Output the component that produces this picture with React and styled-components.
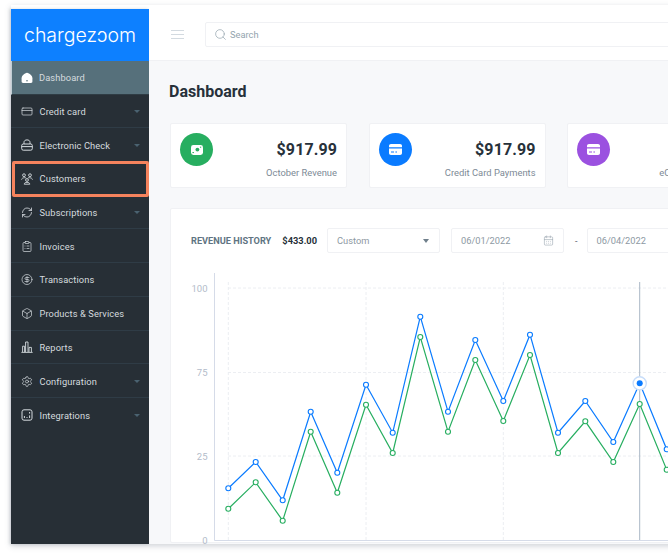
import styled, { createGlobalStyle } from 'styled-components';
import { CreditCard, RefreshCw, ClipboardList, CircleDollarSign, Box, Settings, Search, CalendarDays } from 'lucide-react';

const Global = createGlobalStyle`
    html, body {
        margin: 0;
        width: 668px;
        height: 553px;
        overflow: hidden;
        background: #fff;
        font-family: Roboto, "Liberation Sans", sans-serif;
    }
    * { box-sizing: border-box; }
`;

const HomeIcon = () => (
    <svg width="12" height="12" viewBox="0 0 12 12">
        <path d="M6 .8 C8.5 1.4 11.4 3.6 11.4 6.2 V9.6 C11.4 10.6 10.8 11 10 11 H2 C1.2 11 .6 10.6 .6 9.6 V6.2 C.6 3.6 3.5 1.4 6 .8Z" fill="#fff" />
        <circle cx="6" cy="8.8" r=".8" fill="#56707b" />
    </svg>
);

const LockCardIcon = () => (
    <svg width="12" height="12" viewBox="0 0 12 12" fill="none" stroke="#d5dbdf" strokeWidth="1">
        <rect x=".7" y="5" width="10.6" height="6.2" rx="1.6" />
        <path d="M3 5 V3.4 C3 1.7 4.3 .9 6 .9 C7.7 .9 9 1.7 9 3.4 V5" />
        <path d="M.7 7.6 H11.3" />
    </svg>
);

const PeopleIcon = () => (
    <svg width="12" height="12" viewBox="0 0 12 12" fill="none" stroke="#d5dbdf" strokeWidth=".9">
        <circle cx="3" cy="2.2" r="1.4" />
        <circle cx="9" cy="2.2" r="1.4" />
        <circle cx="6" cy="7" r="1.4" />
        <path d="M.6 6.6 C.6 4.4 5.2 4.4 5.2 5.2 M6.8 5.2 C6.8 4.4 11.4 4.4 11.4 6.6 M3.2 11.2 C3.2 8.7 8.8 8.7 8.8 11.2 Z" />
    </svg>
);

const BarsIcon = () => (
    <svg width="12" height="12" viewBox="0 0 12 12" fill="none" stroke="#d5dbdf" strokeWidth=".9">
        <path d="M1.6 11 V5.2 H3.6 V11 M4.6 11 V1 H7 V11 M8 11 V6.4 H10.4 V11 M.4 11.4 H11.6" />
    </svg>
);

const PluginIcon = () => (
    <svg width="12" height="12" viewBox="0 0 12 12" fill="none" stroke="#d5dbdf" strokeWidth="1">
        <rect x="1" y=".8" width="10" height="10.4" rx="2" />
        <path d="M3.4 9 V7 M6 9 V8 M8.6 4.6 V3 M8.6 9 V6.4" />
    </svg>
);

const BanknoteIcon = () => (
    <svg width="16" height="16" viewBox="0 0 16 16">
        <rect x="2" y="3" width="12" height="10" rx="2.4" fill="#fff" />
        <circle cx="8.4" cy="7.6" r="1.9" fill="#27ae60" />
        <path d="M11 5.2 h1.2 M3.4 10.6 h1.6" stroke="#27ae60" strokeWidth="1" />
    </svg>
);

const CardFillIcon = ({ color }) => (
    <svg width="15" height="15" viewBox="0 0 15 15">
        <path d="M1 4 C1 2.8 1.8 2 3 2 H12 C13.2 2 14 2.8 14 4 V5.2 H1 Z" fill="#fff" />
        <path d="M1 6.6 H14 V11 C14 12.2 13.2 13 12 13 H3 C1.8 13 1 12.2 1 11 Z" fill="#fff" />
        <path d="M3 10 H6 M7.4 10 H9" stroke={color} strokeWidth="1" />
    </svg>
);

const menu = [
    { label: 'Dashboard', icon: <HomeIcon />, active: true },
    { label: 'Credit card', icon: <CreditCard size={13} strokeWidth={1.4} />, arrow: true },
    { label: 'Electronic Check', icon: <LockCardIcon />, arrow: true },
    { label: 'Customers', icon: <PeopleIcon />, boxed: true },
    { label: 'Subscriptions', icon: <RefreshCw size={13} strokeWidth={1.6} />, arrow: true },
    { label: 'Invoices', icon: <ClipboardList size={13} strokeWidth={1.4} /> },
    { label: 'Transactions', icon: <CircleDollarSign size={13} strokeWidth={1.4} /> },
    { label: 'Products & Services', icon: <Box size={13} strokeWidth={1.4} /> },
    { label: 'Reports', icon: <BarsIcon /> },
    { label: 'Configuration', icon: <Settings size={13} strokeWidth={1.4} />, arrow: true },
    { label: 'Integrations', icon: <PluginIcon />, arrow: true },
];

const cards = [
    { color: '#27ae60', amount: '$917.99', label: 'October Revenue', icon: <BanknoteIcon /> },
    { color: '#0a7bff', amount: '$917.99', label: 'Credit Card Payments', icon: <CardFillIcon color="#0a7bff" /> },
    { color: '#9b51e0', amount: '$917.99', label: 'eCheck Payments', icon: <CardFillIcon color="#9b51e0" /> },
];

const xs = [227.3, 254.7, 281.7, 309.7, 336.3, 365, 391.7, 419.3, 447, 474.3, 502.3, 529, 557, 584.3, 612.3, 638.7, 665.7, 693];
const blue = [488.3, 462, 500.3, 411.7, 472.7, 384.7, 432.7, 316.7, 411.7, 340, 401, 334.7, 432.7, 401, 442, 383.3, 449.3, 420];
const green = [508.7, 482.3, 520.7, 431.7, 492.7, 404.7, 453, 337, 431.7, 360, 421, 355, 453, 421.3, 462, 404, 469.7, 440];

function Series({ values, color }) {
    return (
        <g>
            <polyline points={values.map((y, i) => `${xs[i]},${y}`).join(' ')} fill="none" stroke={color} strokeWidth="1.2" />
            {values.map((y, i) => (
                <circle key={i} cx={xs[i]} cy={y} r="2.5" fill="#fff" stroke={color} strokeWidth="1.1" />
            ))}
        </g>
    );
}

function Chart() {
    return (
        <svg width="498" height="278" viewBox="170 270 498 278">
            {[288, 372.5, 456].map(y => (
                <line key={y} x1="227" x2="668" y1={y} y2={y} stroke="#eceef2" strokeWidth="1" strokeDasharray="3 2" />
            ))}
            {[227.3, 365, 502.3].map(x => (
                <line key={x} x1={x} x2={x} y1="282" y2="540" stroke="#eceef2" strokeWidth="1" strokeDasharray="3 2" />
            ))}
            <path d="M213.5 273 V540.5 H668" fill="none" stroke="#d5dbe8" strokeWidth="1" />
            {[['100', 288], ['75', 372.5], ['25', 456], ['0', 540]].map(([t, y]) => (
                <text key={t} x="206.5" y={y + 3.5} textAnchor="end" fontSize="9.5" fill="#b3bcca" fontFamily="Roboto, sans-serif">{t}</text>
            ))}
            <line x1="638.7" x2="638.7" y1="282" y2="540" stroke="#a9b7c6" strokeWidth="1" />
            <Series values={green} color="#27ae60" />
            <Series values={blue} color="#0a7bff" />
            <circle cx="638.7" cy="383.3" r="6.6" fill="#fff" stroke="#c7ddfa" strokeWidth="1.4" />
            <circle cx="638.7" cy="383.3" r="3" fill="#0a7bff" />
        </svg>
    );
}

export default function App() {
    return (
        <>
            <Global />
            <Frame>
                <Sidebar>
                    <Logo>chargezɔom</Logo>
                    {menu.map(m => (
                        <Row key={m.label} $active={m.active} $boxed={m.boxed}>
                            <RowIcon>{m.icon}</RowIcon>
                            <RowLabel>{m.label}</RowLabel>
                            {m.arrow && <Caret />}
                        </Row>
                    ))}
                </Sidebar>
                <Main>
                    <Topbar>
                        <Burger><span /><span /><span /></Burger>
                        <SearchBox>
                            <Search size={13} strokeWidth={1.3} color="#93a3ad" />
                            <span>Search</span>
                        </SearchBox>
                    </Topbar>
                    <Content>
                        <Title>Dashboard</Title>
                        <Cards>
                            {cards.map(c => (
                                <Card key={c.color}>
                                    <Circle $color={c.color}>{c.icon}</Circle>
                                    <CardText>
                                        <Amount>{c.amount}</Amount>
                                        <CardLabel>{c.label}</CardLabel>
                                    </CardText>
                                </Card>
                            ))}
                        </Cards>
                        <Panel>
                            <PanelHeader>
                                <PanelTitle>REVENUE HISTORY</PanelTitle>
                                <PanelTotal>$433.00</PanelTotal>
                                <Field>
                                    <span>Custom</span>
                                    <FieldCaret />
                                </Field>
                                <Field>
                                    <span>06/01/2022</span>
                                    <CalendarDays size={11} strokeWidth={1.3} color="#9aa6b0" />
                                </Field>
                                <Dash>-</Dash>
                                <Field>
                                    <span>06/04/2022</span>
                                </Field>
                            </PanelHeader>
                            <Chart />
                        </Panel>
                    </Content>
                </Main>
            </Frame>
        </>
    );
}

const Frame = styled.div`
    display: flex;
    width: 690px;
    height: 539px;
    margin: 5px 0 0 11px;
    box-shadow: 0 2px 6px rgba(60, 70, 90, 0.25);
`;

const Sidebar = styled.div`
    width: 138px;
    flex-shrink: 0;
    margin-top: 4px;
    background: #272f36;
    box-shadow: -1px 0 3px rgba(60, 70, 90, 0.2);
`;

const Logo = styled.div`
    height: 52px;
    display: flex;
    align-items: center;
    justify-content: center;
    background: #0d80ff;
    color: #fff;
    font-family: Inter, sans-serif;
    font-weight: 300;
    font-size: 19.5px;
`;

const Row = styled.div`
    position: relative;
    height: 33.7px;
    display: flex;
    align-items: center;
    padding: 1px 10px 0 ${p => (p.$active ? '8.5px' : '10px')};
    color: #d5dbdf;
    background: ${p => (p.$active ? '#56707b' : 'transparent')};
    border-left: ${p => (p.$active ? '1.5px solid #c2ced4' : 'none')};
    border-bottom: 1px solid ${p => (p.$active ? '#2f3c44' : '#2f3c46')};

    &:last-child {
        border-bottom: none;
    }

    ${p => p.$boxed && `
        &::after {
            content: '';
            position: absolute;
            top: -1px;
            bottom: -2px;
            left: 1px;
            right: 0;
            border: 3px solid #f5835d;
            border-radius: 2px;
        }
    `}
`;

const RowIcon = styled.div`
    width: 12px;
    height: 12px;
    display: flex;
    align-items: center;
    justify-content: center;
    flex-shrink: 0;
    color: #d5dbdf;
`;

const RowLabel = styled.span`
    margin-left: 6.5px;
    font-size: 9.3px;
    letter-spacing: 0.1px;
    flex: 1;
    white-space: nowrap;
`;

const Caret = styled.i`
    width: 0;
    height: 0;
    margin-right: -1px;
    border-left: 3px solid transparent;
    border-right: 3px solid transparent;
    border-top: 3px solid #4a6270;
`;

const Main = styled.div`
    flex: 1;
    min-width: 0;
    display: flex;
    flex-direction: column;
`;

const Topbar = styled.div`
    height: 56px;
    flex-shrink: 0;
    display: flex;
    align-items: center;
    padding: 4px 0 0 22px;
    background: #fff;
    border-bottom: 1px solid #f0f1f4;
`;

const Burger = styled.div`
    width: 13px;
    margin-right: 21px;
    display: flex;
    flex-direction: column;
    gap: 2.5px;

    span {
        height: 1.2px;
        background: #d3dae0;
    }
`;

const SearchBox = styled.div`
    flex: 1;
    height: 25.5px;
    display: flex;
    align-items: center;
    gap: 3px;
    padding-left: 8px;
    border: 1px solid #f0f1f4;
    border-radius: 2px;
    font-size: 9.3px;
    color: #93a3ad;
`;

const Content = styled.div`
    flex: 1;
    min-height: 0;
    padding: 0 0 0 21px;
    background: #f7f8fa;
`;

const Title = styled.h1`
    margin: 21px 0 21px -1px;
    height: 20px;
    font-size: 16px;
    line-height: 20px;
    font-weight: 700;
    color: #27313a;
`;

const Cards = styled.div`
    display: flex;
    gap: 21.5px;
`;

const Card = styled.div`
    width: 177px;
    height: 65px;
    flex-shrink: 0;
    display: flex;
    justify-content: space-between;
    padding: 9px 9px 0;
    background: #fff;
    border: 1px solid #f0f1f4;
    border-radius: 2px;
`;

const Circle = styled.div`
    width: 33px;
    height: 33px;
    border-radius: 50%;
    display: flex;
    align-items: center;
    justify-content: center;
    background: ${p => p.$color};
`;

const CardText = styled.div`
    display: flex;
    flex-direction: column;
    align-items: flex-end;
`;

const Amount = styled.div`
    margin-top: 7px;
    font-size: 16px;
    line-height: 20px;
    font-weight: 700;
    letter-spacing: 0.1px;
    color: #27313a;
`;

const CardLabel = styled.div`
    margin-top: 7px;
    font-size: 9.4px;
    line-height: 12px;
    color: #7d8a96;
    white-space: nowrap;
`;

const Panel = styled.div`
    margin-top: 20px;
    height: 335px;
    padding: 19px 0 0 20px;
    background: #fff;
    border: 1px solid #f0f1f4;
    border-radius: 2px;

    svg {
        display: block;
    }

    & > svg {
        margin: 17px 0 0 -20px;
    }
`;

const PanelHeader = styled.div`
    display: flex;
    align-items: center;
    height: 25px;
`;

const PanelTitle = styled.span`
    width: 81px;
    font-size: 9.2px;
    font-weight: 700;
    color: #5f7482;
    white-space: nowrap;
`;

const PanelTotal = styled.span`
    width: 35px;
    margin: 0 10px 0 11px;
    font-size: 9.3px;
    font-weight: 700;
    color: #27313a;
    white-space: nowrap;
`;

const Field = styled.div`
    width: 113px;
    height: 25px;
    flex-shrink: 0;
    display: flex;
    align-items: center;
    justify-content: space-between;
    margin-right: 11px;
    padding: 0 9px;
    border: 1px solid #f0f1f4;
    border-radius: 2px;
    font-size: 9.3px;
    color: #8d99a3;
`;

const FieldCaret = styled.i`
    width: 0;
    height: 0;
    margin-right: 1px;
    border-left: 3.5px solid transparent;
    border-right: 3.5px solid transparent;
    border-top: 4px solid #6f7f8b;
`;

const Dash = styled.span`
    margin: 0 9px 0 0;
    font-size: 9px;
    color: #56626c;
`;
